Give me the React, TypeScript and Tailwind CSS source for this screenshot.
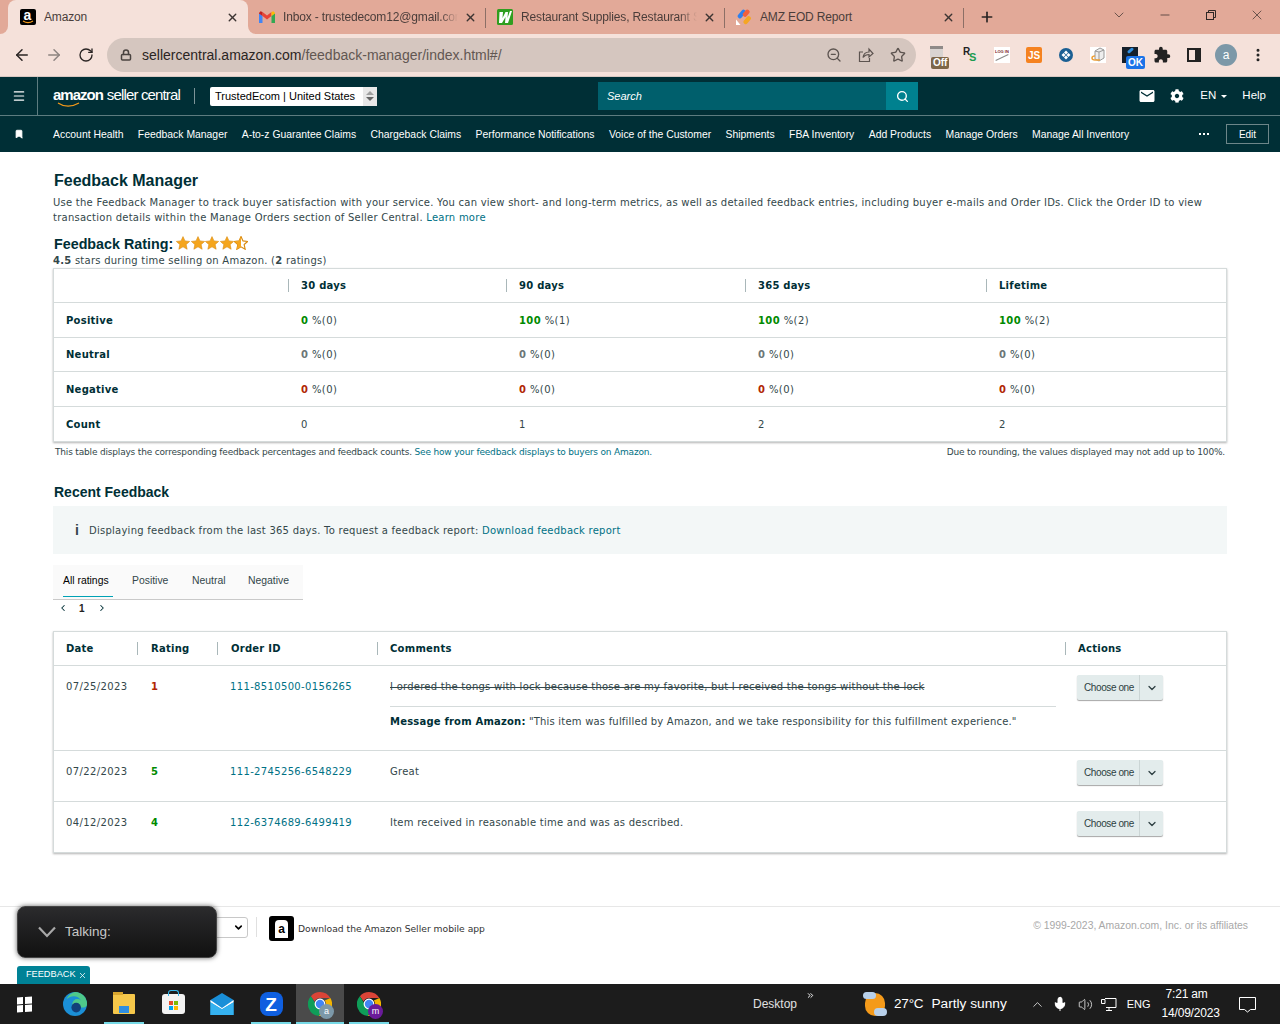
import React from "react";
import { ArrowLeft, ArrowRight, RotateCw, Lock, ZoomOut, Star, X, Plus, ChevronDown, Minus, MoreVertical, Menu, Bookmark, Search, ChevronLeft, ChevronRight, Mic, Volume2, ChevronUp, ChevronsRight } from "lucide-react";
import { MdEmail, MdExtension } from "react-icons/md";
import { FaCog } from "react-icons/fa";

const body = "font-['DejaVu_Sans','Verdana',sans-serif]";
const arial = "font-['Liberation_Sans',Arial,sans-serif]";

function AmazonA() {
  return (
    <div className="relative h-[16px] w-[16px] shrink-0 rounded-[2px] bg-black">
      <span className={`${arial} absolute left-[3.500px] top-[-2px] text-[14px] font-bold leading-[16px] text-white`}>a</span>
      <svg width="12" height="4" viewBox="0 0 12 4" className="absolute bottom-[1px] left-[2px]"><path d="M1 1c3 2 7 2 10 0" fill="none" stroke="#f49a1a" strokeWidth="1.200" /></svg>
    </div>
  );
}

function Gmail() {
  return (
    <svg width="16" height="12" viewBox="0 0 16 12">
      <path d="M0 2v10h3.500V5z" fill="#4285f4" />
      <path d="M16 2v10h-3.500V5z" fill="#34a853" />
      <path d="M3.500 5 8 8.500 12.500 5V1L8 4.500 3.500 1z" fill="#ea4335" />
      <path d="M0 2 1.500.3 3.500 1v4L0 2.500z" fill="#c5221f" />
      <path d="M16 2 14.500.3 12.500 1v4L16 2.500z" fill="#fbbc04" />
    </svg>
  );
}

function WLogo() {
  return (
    <svg width="16" height="16" viewBox="0 0 16 16">
      <rect width="16" height="16" rx="1.500" fill="#2f9e1f" />
      <path d="M2.500 3H6L5.500 9 8.500 3h2.500L10.500 9 13 2h2L11 14H8L8.500 8 5 14H2z" fill="#fff" />
    </svg>
  );
}

function Jira() {
  return (
    <svg width="16" height="16" viewBox="0 0 16 16">
      <rect x="3.500" y="0" width="4.500" height="10" rx="2.200" transform="rotate(40 5.700 5)" fill="#2f80ed" />
      <rect x="8" y="0" width="4.500" height="8" rx="2.200" transform="rotate(40 10 4)" fill="#f2603c" />
      <rect x="9" y="6.500" width="4.500" height="9" rx="2.200" transform="rotate(40 11 11)" fill="#f5a623" />
      <path d="M0 10.500l4.500 5.500H0z" fill="#fff" />
    </svg>
  );
}

function Tab({ icon, title, active, width, sep, fade }: { icon: React.ReactNode; title: string; active?: boolean; width: string; sep?: boolean; fade?: boolean }) {
  return (
    <div className={`relative flex h-full items-center ${active ? "pl-[12px]" : "pl-[11px]"} pr-[9px] ${width} ${active ? "rounded-t-[8px] bg-[#f5e1da]" : ""}`}>
      <div className="flex w-[16px] shrink-0 items-center justify-center">{icon}</div>
      <div className={`${arial} ml-[8px] min-w-0 flex-1 overflow-hidden whitespace-nowrap text-[12px] tracking-[-0.15px] text-[#4a3d3a] ${fade ? "[mask-image:linear-gradient(to_right,black_90%,transparent)]" : ""}`}>{title}</div>
      <X size={13} strokeWidth={2.500} className="ml-[6px] shrink-0 text-[#3c3432]" />
      {sep && <div className="absolute right-0 top-[8px] h-[20px] w-px bg-[#8c6f66]" />}
      {active && (
        <div className="absolute bottom-0 right-[-8px] h-[8px] w-[8px] bg-[#f5e1da]">
          <div className="h-full w-full rounded-bl-[8px] bg-[#e2a998]" />
        </div>
      )}
      {active && (
        <div className="absolute bottom-0 left-[-8px] h-[8px] w-[8px] bg-[#f5e1da]">
          <div className="h-full w-full rounded-br-[8px] bg-[#e2a998]" />
        </div>
      )}
    </div>
  );
}

function ChromeBars() {
  return (
    <div className="bg-[#f5e1da]">
      <div className="flex h-[34px] items-stretch bg-[#e2a998]">
        <div className="w-[8px]" />
        <Tab active width="w-[240px]" title="Amazon" icon={<AmazonA />} />
        <Tab width="w-[238px]" sep fade title="Inbox - trustedecom12@gmail.com" icon={<Gmail />} />
        <Tab width="w-[239px]" sep fade title="Restaurant Supplies, Restaurant S" icon={<WLogo />} />
        <Tab width="w-[239px]" sep title="AMZ EOD Report" icon={<Jira />} />
        <div className="ml-[13px] flex w-[20px] items-center justify-center text-[#2a2423]"><Plus size={16} strokeWidth={2.500} /></div>
        <div className="flex-1" />
        <div className="flex w-[169px] items-start pt-[7px] text-[#2f2725]">
          <ChevronDown size={16} strokeWidth={1} className="mr-[31px]" />
          <Minus size={14} strokeWidth={1.200} className="mr-[33px] mt-[1px]" />
          <svg width="12" height="12" viewBox="0 0 12 12" className="mr-[32px] mt-[2px]" fill="none" stroke="currentColor"><rect x="1.500" y="3.500" width="7" height="7" /><path d="M3.500 3.500v-2h7v7h-2" /></svg>
          <X size={16} strokeWidth={1} />
        </div>
      </div>
      <div className="flex h-[43px] items-center border-b border-[#d8c8c2] pl-[13px]">
        <ArrowLeft size={18} strokeWidth={2} className="text-[#2a2423]" />
        <ArrowRight size={18} strokeWidth={2} className="ml-[14px] text-[#8d8480]" />
        <RotateCw size={16} strokeWidth={2} className="ml-[15px] text-[#2a2423]" />
        <div className="ml-[13px] flex h-[34px] w-[809px] items-center rounded-full bg-[#d5c6bf] pl-[13px] pr-[10px]">
          <Lock size={12} strokeWidth={3} className="text-[#4a4340]" />
          <div className={`${arial} ml-[10px] flex-1 text-[14px] text-[#625752]`}>
            <span className="text-[#2b2523]">sellercentral.amazon.com</span>/feedback-manager/index.html#/
          </div>
          <ZoomOut size={16} className="mr-[16px] text-[#5d5450]" />
          <svg width="16" height="16" viewBox="0 0 16 16" fill="none" stroke="#5d5450" strokeWidth="1.200" className="mr-[16px]">
            <path d="M5 5H1.500v9.500h10V11" />
            <path d="M5 10.500C5.500 7 8 5 11 5V2l4 4.500L11 10V7.500c-2.500 0-4.500 1-6 3z" />
          </svg>
          <Star size={16} className="text-[#5d5450]" />
        </div>
        <Extensions />
      </div>
    </div>
  );
}

function Slot({ children }: { children: React.ReactNode }) {
  return <div className="relative flex h-[24px] w-[32px] items-center justify-center">{children}</div>;
}

function Extensions() {
  return (
    <div className="ml-[6px] flex items-center text-[#222]">
      <Slot>
        <div className="mr-[3px] mt-[-6px] h-[13px] w-[13px] rounded-b-[3px] border-t-[3px] border-[#8f8a88] bg-[#d9d4d1]" />
        <div className={`${arial} absolute left-[9px] top-[14px] rounded-[2px] bg-[#7d6648] px-[2px] text-[10px] font-bold leading-[12px] text-white`}>Off</div>
      </Slot>
      <Slot>
        <div className={`${arial} relative h-[16px] w-[16px] text-[10px] font-bold leading-none`}>
          <span className="absolute left-[1px] top-0 text-[#222]">R</span>
          <span className="absolute left-[7px] top-[5px] text-[11px] text-[#1a9b50]">S</span>
        </div>
      </Slot>
      <Slot>
        <div className="relative h-[16px] w-[16px] overflow-hidden bg-white">
          <span className={`${arial} absolute left-[1px] top-[3px] whitespace-nowrap text-[4px] font-bold leading-none text-[#7a2020]`}>LOG IN</span>
          <div className="absolute left-[1px] top-[10px] h-px w-[14px] -rotate-[25deg] bg-[#888]" />
        </div>
      </Slot>
      <Slot>
        <div className={`${arial} flex h-[16px] w-[16px] items-center justify-center rounded-[2px] bg-[#f58220] text-[10px] font-bold text-white`}>JS</div>
      </Slot>
      <Slot>
        <svg width="14" height="14" viewBox="0 0 14 14"><circle cx="7" cy="7" r="7" fill="#1a5f93" /><path d="M7 2.500l2 2-2 2-2-2zM2.500 7l2-2 2 2-2 2zM11.500 7l-2-2-2 2 2 2zM7 11.500l2-2-2-2-2 2z" fill="#fff" /></svg>
      </Slot>
      <Slot>
        <svg width="16" height="16" viewBox="0 0 16 16">
          <rect width="16" height="16" fill="#fff" />
          <path d="M5 4l5-3 4 2v8l-5 3-4-2z" fill="#eee" stroke="#999" />
          <path d="M9 5v9M5 4l4 1 5-2" fill="none" stroke="#999" />
          <path d="M5 9c-4 0-4 4 0 4h5" fill="none" stroke="#eda13a" strokeWidth="1.500" />
        </svg>
      </Slot>
      <Slot>
        <div className="relative h-[16px] w-[16px] bg-[#15202b]">
          <div className="absolute left-[5px] top-[2px] h-[3px] w-[7px] -rotate-[40deg] rounded-full bg-[#2f8fe0]" />
          <div className={`${arial} absolute left-[4px] top-[9px] rounded-[2px] bg-[#1a73e8] px-[2px] text-[10px] font-bold leading-[13px] text-white`}>OK</div>
        </div>
      </Slot>
      <Slot><MdExtension size={18} className="text-[#222]" /></Slot>
      <Slot>
        <div className="h-[14px] w-[14px] border-[2px] border-r-[6px] border-[#222] bg-[#f5e1da]" />
      </Slot>
      <Slot>
        <div className={`${arial} flex h-[22px] w-[22px] items-center justify-center rounded-full bg-[#7c98a8] text-[12px] text-white`}>a</div>
      </Slot>
      <Slot><MoreVertical size={16} strokeWidth={2.500} /></Slot>
    </div>
  );
}

function AppHeader() {
  const links = ["Account Health", "Feedback Manager", "A-to-z Guarantee Claims", "Chargeback Claims", "Performance Notifications", "Voice of the Customer", "Shipments", "FBA Inventory", "Add Products", "Manage Orders", "Manage All Inventory"];
  return (
    <div className={`${arial} bg-[#002f36] text-white`}>
      <div className="flex h-[39px] items-center border-b border-[#5d7c80]">
        <div className="flex h-full w-[38px] items-center justify-center border-r border-[#5d7c80]"><Menu size={14} strokeWidth={2} /></div>
        <div className="relative ml-[15px] -mt-[3px] flex w-[127px] items-baseline whitespace-nowrap text-[15px] leading-none">
          <span className="font-bold tracking-[-1px]">amazon</span>
          <span className="ml-[4px] font-light tracking-[-0.85px]">seller central</span>
          <svg width="24" height="6" viewBox="0 0 24 6" className="absolute left-[4px] top-[15px]"><path d="M1 1c6 4 14 4 21 0" fill="none" stroke="#f49a1a" strokeWidth="1.200" /></svg>
        </div>
        <div className="ml-[14px] h-[16px] w-px bg-[#7d9498]" />
        <div className="ml-[15px] flex h-[19px] w-[167px] items-center rounded-[2px] bg-white pl-[5px] text-[11px] text-black">
          <span className="flex-1 whitespace-nowrap">TrustedEcom | United States</span>
          <div className="flex h-full w-[14px] flex-col items-center justify-center gap-[2px] bg-[#e8e8e8]">
            <div className="h-0 w-0 border-x-[4px] border-b-[4px] border-x-transparent border-b-[#a0a0a0]" />
            <div className="h-0 w-0 border-x-[4px] border-t-[4px] border-x-transparent border-t-[#666]" />
          </div>
        </div>
        <div className="ml-[221px] flex h-[28px] w-[320px] items-center bg-[#005f6c] pl-[9px]">
          <span className="flex-1 text-[11px] italic text-white">Search</span>
          <div className="flex h-full w-[32px] items-center justify-center bg-[#00818f]"><Search size={13} strokeWidth={2.500} /></div>
        </div>
        <div className="flex-1" />
        <MdEmail size={18} className="mr-[14px]" />
        <FaCog size={14} className="mr-[16px]" />
        <span className="text-[11.500px]">EN</span>
        <div className="ml-[5px] mr-[15px] h-0 w-0 border-x-[3px] border-t-[3px] border-x-transparent border-t-white" />
        <span className="mr-[14px] text-[11.500px]">Help</span>
      </div>
      <div className="flex h-[36px] items-center">
        <Bookmark size={10} fill="#fff" className="ml-[14px] mr-[29px]" />
        <div className="flex gap-[14.400px] whitespace-nowrap pt-[2px] text-[10.400px]">
          {links.map((l) => <span key={l}>{l}</span>)}
        </div>
        <div className="flex-1" />
        <div className="mr-[17px] flex gap-[2px]">
          <i className="h-[2px] w-[2px] bg-white" /><i className="h-[2px] w-[2px] bg-white" /><i className="h-[2px] w-[2px] bg-white" />
        </div>
        <div className="mr-[11px] flex h-[20px] w-[43px] items-center justify-center border border-[#6d8689] text-[10px]">Edit</div>
      </div>
    </div>
  );
}

const starPath = "M12 1l3.400 7.400 8 .9-6 5.400 1.700 8L12 18.600 4.900 22.700l1.700-8-6-5.400 8-.9z";
const Stars = () => (
  <span className="ml-[3px] -mt-[3px] inline-flex items-center gap-[.5px]">
    {[0, 1, 2, 3].map((i) => (
      <svg key={i} width="14" height="14" viewBox="0 0 24 24"><path d={starPath} fill="#f5a51c" stroke="#d98a0e" /></svg>
    ))}
    <svg width="14" height="14" viewBox="0 0 24 24"><path d={starPath} fill="#fff" stroke="#d98a0e" strokeWidth="2" /><path d="M12 1v17.600L4.900 22.700l1.700-8-6-5.400 8-.9z" fill="#f5a51c" /></svg>
  </span>
);

const colsA = "grid grid-cols-[234px_218px_239px_241px_1fr]";

function HeadCell({ children, first, ml = "ml-[12px]" }: { children?: React.ReactNode; first?: boolean; ml?: string }) {
  return (
    <div className="flex items-center">
      {!first && <div className="h-[13px] w-px bg-[#a9b7b9]" />}
      <span className={`${ml} font-bold tracking-[0.25px] text-[#002f36]`}>{children}</span>
    </div>
  );
}

function Pct({ v, n, color }: { v: string; n: string; color: string }) {
  return (
    <div className="pl-[13px] tracking-[0.4px]">
      <span className={`font-bold ${color}`}>{v}</span> %({n})
    </div>
  );
}

function SummaryTable() {
  const g = "text-[#008a00]", d = "text-[#6c7778]", r = "text-[#b12704]";
  const rows: [string, [string, string][], string][] = [
    ["Positive", [["0", "0"], ["100", "1"], ["100", "2"], ["100", "2"]], g],
    ["Neutral", [["0", "0"], ["0", "0"], ["0", "0"], ["0", "0"]], d],
    ["Negative", [["0", "0"], ["0", "0"], ["0", "0"], ["0", "0"]], r],
  ];
  return (
    <div className="mt-[1px] border border-[#d5dbdb] bg-white text-[10px] text-[#33474a] shadow-[0_1px_2px_rgba(0,0,0,0.3)]">
      <div className={`${colsA} h-[33px]`}>
        <HeadCell first />
        <HeadCell>30 days</HeadCell>
        <HeadCell>90 days</HeadCell>
        <HeadCell>365 days</HeadCell>
        <HeadCell>Lifetime</HeadCell>
      </div>
      {rows.map(([name, vals, color], i) => (
        <div key={name} className={`${colsA} ${i === 1 ? "h-[34px]" : "h-[35px]"} items-center border-t border-[#d5dbdb]`}>
          <div className="pl-[12px] font-bold tracking-[0.25px] text-[#002f36]">{name}</div>
          {vals.map(([v, n], j) => <Pct key={j} v={v} n={n} color={color} />)}
        </div>
      ))}
      <div className={`${colsA} h-[35px] items-center border-t border-[#d5dbdb]`}>
        <div className="pl-[12px] font-bold tracking-[0.25px] text-[#002f36]">Count</div>
        {["0", "1", "2", "2"].map((c, j) => <div key={j} className="pl-[13px]">{c}</div>)}
      </div>
    </div>
  );
}

const colsB = "grid grid-cols-[83px_80px_160px_688px_1fr]";

function ChooseOne() {
  return (
    <div className={`${arial} flex h-[25px] w-[86px] items-center rounded-[2px] bg-[#e3ecec] text-[10px] tracking-[-0.4px] text-[#2d3f42] shadow-[0_1px_1px_rgba(0,0,0,0.35)]`}>
      <span className="flex-1 pl-[7px]">Choose one</span>
      <div className="flex h-full w-[24px] items-center justify-center border-l border-[#cbd5d5]"><ChevronDown size={12} strokeWidth={2.500} /></div>
    </div>
  );
}

function FeedbackRow({ date, rating, rc, id, children, h }: { date: string; rating: string; rc: string; id: string; children: React.ReactNode; h: string }) {
  return (
    <div className={`${colsB} ${h} border-t border-[#d5dbdb]`}>
      <div className="pl-[12px] pt-[13px] tracking-[0.4px]">{date}</div>
      <div className={`pl-[14px] pt-[13px] font-bold ${rc}`}>{rating}</div>
      <div className="pl-[13px] pt-[13px] tracking-[0.35px] text-[#007185]">{id}</div>
      <div className="pl-[13px] pr-[9px] pt-[13px]">{children}</div>
      <div className="pl-[12px] pt-[9px]"><ChooseOne /></div>
    </div>
  );
}

function RecentTable() {
  return (
    <div className="border border-[#d5dbdb] bg-white text-[10px] text-[#33474a] shadow-[0_1px_2px_rgba(0,0,0,0.3)]">
      <div className={`${colsB} h-[33px]`}>
        <HeadCell first>Date</HeadCell>
        <HeadCell ml="ml-[13px]">Rating</HeadCell>
        <HeadCell ml="ml-[13px]">Order ID</HeadCell>
        <HeadCell ml="ml-[12px]">Comments</HeadCell>
        <HeadCell ml="ml-[12px]">Actions</HeadCell>
      </div>
      <FeedbackRow date="07/25/2023" rating="1" rc="text-[#b12704]" id="111-8510500-0156265" h="h-[85px]">
        <div className="border-b border-[#d5dbdb] pb-[12px] line-through">I ordered the tongs with lock because those are my favorite, but I received the tongs without the lock</div>
        <div className="mt-[7px] tracking-[0.2px]"><b className="text-[#002f36]">Message from Amazon:</b> "This item was fulfilled by Amazon, and we take responsibility for this fulfillment experience."</div>
      </FeedbackRow>
      <FeedbackRow date="07/22/2023" rating="5" rc="text-[#008a00]" id="111-2745256-6548229" h="h-[51px]">Great</FeedbackRow>
      <FeedbackRow date="04/12/2023" rating="4" rc="text-[#008a00]" id="112-6374689-6499419" h="h-[51px]">Item received in reasonable time and was as described.</FeedbackRow>
    </div>
  );
}

function Main() {
  return (
    <div className={`${body} px-[53px] pt-[19px] text-[10px] tracking-[0.25px] text-[#33474a]`}>
      <h1 className={`${arial} pl-px text-[16px] font-bold leading-[20px] tracking-normal text-[#002f36]`}>Feedback Manager</h1>
      <p className="mt-[4px] leading-[15px]">
        Use the Feedback Manager to track buyer satisfaction with your service. You can view short- and long-term metrics, as well as detailed feedback entries, including buyer e-mails and Order IDs. Click the Order ID to view transaction details within the Manage Orders section of Seller Central. <span className="text-[#007185]">Learn more</span>
      </p>
      <div className={`${arial} mt-[11px] flex h-[17px] items-center pl-px text-[14.300px] font-bold tracking-normal text-[#002f36]`}>Feedback Rating:<Stars /></div>
      <div className="mt-[2px] leading-[12px] text-[#33474a]"><b>4.5</b> stars during time selling on Amazon. (<b>2</b> ratings)</div>
      <SummaryTable />
      <div className="mt-[4px] flex justify-between px-[2px] text-[9px] leading-[12px] tracking-[-0.18px]">
        <span>This table displays the corresponding feedback percentages and feedback counts. <span className="text-[#007185]">See how your feedback displays to buyers on Amazon.</span></span>
        <span>Due to rounding, the values displayed may not add up to 100%.</span>
      </div>
      <h2 className={`${arial} mt-[25px] pl-px text-[14px] font-bold leading-[18px] tracking-normal text-[#002f36]`}>Recent Feedback</h2>
      <div className="mt-[5px] flex h-[48px] items-center bg-[#f3f7f7] pl-[22px]">
        <span className={`${arial} w-[14px] text-[14px] font-bold text-[#33474a]`}>i</span>
        <span>Displaying feedback from the last 365 days. To request a feedback report: <span className="text-[#007185]">Download feedback report</span></span>
      </div>
      <div className={`${arial} mt-[11px] flex h-[35px] w-[250px] items-start border-b border-[#c9c9c9] bg-[#fafafa] pt-[8px] text-[10.400px] tracking-normal`}>
        <div className="ml-[10px] h-[24px] w-[50px] border-b border-[#00a2b5] text-black">All ratings</div>
        <div className="ml-[19px] w-[60px]">Positive</div>
        <div className="w-[56px]">Neutral</div>
        <div>Negative</div>
      </div>
      <div className={`${arial} flex h-[18px] items-center pb-[2px] pl-[5px] text-[10px] tracking-normal text-[#002f36]`}>
        <ChevronLeft size={10} strokeWidth={2.500} />
        <span className="ml-[11px] font-bold text-[#222]">1</span>
        <ChevronRight size={10} strokeWidth={2.500} className="ml-[12px]" />
      </div>
      <div className="mt-[13px]"><RecentTable /></div>
    </div>
  );
}

function Footer() {
  return (
    <div className="mt-[53px] flex h-[76px] border-t border-[#e7e7e7] bg-white">
      <div className="ml-[53px] mt-[10px] flex h-[21px] w-[195px] items-center justify-end rounded-[3px] border border-[#c8c8c8] pr-[3px]"><ChevronDown size={11} strokeWidth={3.500} className="text-black" /></div>
      <div className="ml-[8px] mt-[10px] h-[20px] w-px bg-[#e0e0e0]" />
      <div className="ml-[12px] mt-[9px] flex h-[25px] w-[25px] items-center justify-center rounded-[3px] bg-black">
        <div className={`${arial} flex h-[18px] w-[13px] items-center justify-center rounded-t-[4px] bg-white text-[12px] font-bold leading-none text-black`}>a</div>
      </div>
      <div className={`${body} ml-[4px] mt-[16px] text-[9.200px] leading-[12px] text-[#333]`}>Download the Amazon Seller mobile app</div>
      <div className="flex-1" />
      <div className={`${arial} mr-[32px] mt-[13px] text-[10.400px] leading-[12px] text-[#a8a8a8]`}>© 1999-2023, Amazon.com, Inc. or its affiliates</div>
    </div>
  );
}

function TaskIcon({ children, active, underline }: { children: React.ReactNode; active?: boolean; underline?: boolean }) {
  return (
    <div className={`relative flex h-full items-center justify-center ${active ? "-mx-[4px] w-[48px] bg-[#4a4a4a]" : "w-[40px]"}`}>
      {children}
      {underline && <div className="absolute bottom-0 left-0 right-0 h-[2px] bg-[#76d9e6]" />}
    </div>
  );
}

function ChromeIcon({ badge, color }: { badge: string; color: string }) {
  return (
    <div className="relative h-[24px] w-[24px]">
      <svg width="24" height="24" viewBox="0 0 20 20">
        <path d="M10 0a10 10 0 0 1 8.660 5H10a5 5 0 0 0-4.500 3L2.400 3.500A10 10 0 0 1 10 0z" fill="#db4437" />
        <path d="M18.660 5A10 10 0 0 1 9 20l4.300-6.500A5 5 0 0 0 14 7z" fill="#f4b400" />
        <path d="M2.400 3.500 7 11a4 4 0 0 0 6 2.500L9 20A10 10 0 0 1 2.400 3.500z" fill="#0f9d58" />
        <circle cx="10" cy="10" r="4" fill="#4285f4" stroke="#fff" />
      </svg>
      <div className={`absolute -bottom-[3px] -right-[2px] flex h-[15px] w-[15px] items-center justify-center rounded-full text-[9px] text-white ${color}`}>{badge}</div>
    </div>
  );
}

function Taskbar() {
  return (
    <div className={`${arial} flex h-[40px] items-center bg-[#1c1c1c] text-white`}>
      <div className="flex w-[48px] justify-center">
        <div className="grid skew-y-[-4deg] grid-cols-2 gap-px">
          <i className="h-[7px] w-[6px] bg-white" /><i className="h-[7px] w-[7px] bg-white" /><i className="h-[7px] w-[6px] bg-white" /><i className="h-[7px] w-[7px] bg-white" />
        </div>
      </div>
      <div className="ml-[7px] flex h-full gap-[9px]">
        <TaskIcon>
          <svg width="24" height="24" viewBox="0 0 20 20"><circle cx="10" cy="10" r="10" fill="#1b8fd6" /><path d="M10 0a10 10 0 0 1 10 10c0 3-3 3-5 3H9a4 4 0 0 1 6-6C13 3 7 2 3 6A10 10 0 0 1 10 0z" fill="#4ec98a" /><circle cx="11" cy="13" r="4" fill="#123f7a" /></svg>
        </TaskIcon>
        <TaskIcon underline>
          <div className="relative h-[20px] w-[22px] rounded-[1px] bg-[#f5c74a]"><div className="absolute -top-[2px] left-0 h-[3px] w-[10px] bg-[#d9a62e]" /><div className="absolute bottom-[1px] left-[6px] h-[7px] w-[10px] bg-[#2f8ee0]" /></div>
        </TaskIcon>
        <TaskIcon>
          <div className="relative flex h-[20px] w-[23px] items-center justify-center rounded-[3px] bg-[#f3f3f3]">
            <div className="absolute -top-[4px] h-[6px] w-[11px] rounded-t-[3px] border border-b-0 border-[#36b4e8]" />
            <div className="mt-[2px] grid grid-cols-2 gap-px"><i className="h-[4px] w-[4px] bg-[#e74c2b]" /><i className="h-[4px] w-[4px] bg-[#7fba00]" /><i className="h-[4px] w-[4px] bg-[#00a4ef]" /><i className="h-[4px] w-[4px] bg-[#ffb900]" /></div>
          </div>
        </TaskIcon>
        <TaskIcon>
          <svg width="24" height="22" viewBox="0 0 20 19"><path d="M0 6 10 0l10 6v13H0z" fill="#1a8fd8" /><path d="M0 6l10 7 10-7v2L10 14 0 8z" fill="#fff" /><path d="M0 8l10 6 10-6v11H0z" fill="#35b2f0" /></svg>
        </TaskIcon>
        <TaskIcon underline>
          <div className="flex h-[24px] w-[23px] items-center justify-center rounded-[8px] bg-[#0f5fe0] text-[19px] font-bold leading-none text-white">Z</div>
        </TaskIcon>
        <TaskIcon active underline><ChromeIcon badge="a" color="bg-[#7c98a8]" /></TaskIcon>
        <TaskIcon underline><ChromeIcon badge="m" color="bg-[#6a1b9a]" /></TaskIcon>
      </div>
      <div className="ml-[364px] flex items-start text-[12px] text-[#e0e0e0]">
        <span>Desktop</span>
        <ChevronsRight size={9} strokeWidth={2.500} className="ml-[9px] -mt-[4px] text-white" />
      </div>
      <div className="relative ml-[48px] h-[24px] w-[24px]">
        <div className="absolute left-[2px] top-[1px] h-[23px] w-[20px] rounded-full bg-[#f49a1a]" />
        <div className="absolute left-0 top-0 h-[7px] w-[13px] rounded-full bg-[#b8d0ea]" />
        <div className="absolute bottom-0 right-0 h-[8px] w-[13px] rounded-full bg-[#b8d0ea]" />
      </div>
      <span className="ml-[7px] text-[13.500px] tracking-[-0.2px]">27°C</span>
      <span className="ml-[8px] text-[13.700px]">Partly sunny</span>
      <ChevronUp size={15} strokeWidth={1.200} className="ml-[23px]" />
      <Mic size={16} fill="#fff" strokeWidth={1.500} className="ml-[7px]" />
      <Volume2 size={15} strokeWidth={1.200} className="ml-[10px]" />
      <svg width="16" height="16" viewBox="0 0 16 16" fill="none" stroke="#fff" className="ml-[8px]">
        <path d="M.5 3.500h3.500v4H.5zM4 2.500h11v9H5M8 11.500v3M5 14.500h6" />
      </svg>
      <span className="ml-[10px] text-[11px]">ENG</span>
      <div className="ml-[11px] w-[50px] whitespace-nowrap text-center text-[12px] leading-[19px] tracking-[-0.2px]">
        <div>7:21 am</div>
        <div>14/09/2023</div>
      </div>
      <svg width="17" height="17" viewBox="0 0 17 17" fill="none" stroke="#fff" className="ml-[27px]">
        <path d="M.5 1.500h16v12h-5l-3 2.500-3-2.500h-5z" />
      </svg>
    </div>
  );
}

export default function App() {
  return (
    <div className="relative h-[1024px] w-[1280px] overflow-hidden bg-white">
      <div className="flex h-full flex-col">
        <ChromeBars />
        <AppHeader />
        <div className="flex-1 overflow-hidden">
          <Main />
          <Footer />
        </div>
        <Taskbar />
      </div>
      <div className="absolute left-[17px] top-[906px] flex h-[52px] w-[200px] items-center rounded-[8px] border border-[#444] bg-gradient-to-b from-[#2b2b2d] to-[#111] pl-[20px] text-[#c8c8c8] shadow-[0_0_5px_rgba(0,0,0,0.6)]">
        <svg width="18" height="12" viewBox="0 0 18 12" fill="none" stroke="#a8a8a8" strokeWidth="2.200"><path d="M1 1.500 9 10l8-8.500" /></svg>
        <span className={`${arial} ml-[9px] text-[13.500px]`}>Talking:</span>
      </div>
      <div className={`${arial} absolute left-[17px] top-[966px] flex h-[18px] w-[73px] items-center rounded-t-[3px] bg-[#008296] pl-[9px] text-[9.200px] text-white`}>FEEDBACK <X size={9} className="ml-[2px]" /></div>
    </div>
  );
}
